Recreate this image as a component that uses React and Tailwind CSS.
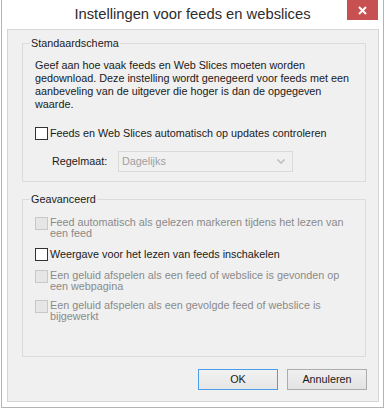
const font = { fontFamily: '"Liberation Sans", Arial, sans-serif' };

function Box({ disabled }) {
    return (
        <div
            className={
                "w-[13px] h-[13px] shrink-0 border " +
                (disabled ? "border-[#c8c8c8] bg-[#e6e6e6]" : "border-[#333333] bg-white")
            }
        />
    );
}

function Check({ disabled, lines, className }) {
    return (
        <div className={"flex items-start " + (className || "")}>
            <Box disabled={disabled} />
            <div
                className={
                    "ml-[2px] whitespace-nowrap " +
                    (lines.length > 1 ? "leading-[11px]" : "leading-[13px]") +
                    (disabled ? " text-[#8a8a8a]" : " text-[#1a1a1a]")
                }
            >
                {lines.map((l, i) => (
                    <div key={i}>{l}</div>
                ))}
            </div>
        </div>
    );
}

function Group({ title, className, children }) {
    return (
        <div className={"relative ml-[14px] w-[344px] border border-[#dcdcdc] pl-[12px] " + className}>
            <span className="absolute left-[7px] top-[-7px] bg-[#f0f0f0] px-[1px] leading-[13px] text-[#1a1a1a]">
                {title}
            </span>
            {children}
        </div>
    );
}

export default function App() {
    return (
        <div className="w-[385px] h-[409px] bg-white px-[1px] pb-[1px] text-[10.8px]" style={font}>
            <div className="w-[383px] h-[408px] border-x border-b border-[#b4b4b4] bg-white">
                {/* title bar */}
                <div className="relative h-[29px] flex items-center justify-center">
                    <span className="text-[14.75px] text-[#2d2d2d] leading-[29px]">
                        Instellingen voor feeds en webslices
                    </span>
                    <div className="absolute right-[5px] top-0 w-[31px] h-[20px] bg-[#c75050] flex items-center justify-center">
                        <svg width="9" height="9" viewBox="0 0 9 9">
                            <path d="M1 1L8 8M8 1L1 8" stroke="white" strokeWidth="2" />
                        </svg>
                    </div>
                </div>

                {/* client area */}
                <div className="ml-[5px] w-[372px] h-[373px] border border-[#d5d5d5] bg-[#f0f0f0]">
                    <Group title="Standaardschema" className="mt-[13px] h-[139px] pt-[15px]">
                        <div className="leading-[13px] text-[#1a1a1a] whitespace-nowrap">
                            <div>Geef aan hoe vaak feeds en Web Slices moeten worden</div>
                            <div>gedownload. Deze instelling wordt genegeerd voor feeds met een</div>
                            <div>aanbeveling van de uitgever die hoger is dan de opgegeven</div>
                            <div>waarde.</div>
                        </div>
                        <Check
                            className="mt-[16px]"
                            lines={["Feeds en Web Slices automatisch op updates controleren"]}
                        />
                        <div className="mt-[11px] ml-[17px] flex items-center">
                            <span className="w-[66px] text-[#1a1a1a]">Regelmaat:</span>
                            <div className="w-[175px] h-[21px] border border-[#dadada] bg-[#f0f0f0] flex items-center justify-between pl-[3px] pr-[7px]">
                                <span className="text-[#a0a0a0]">Dagelijks</span>
                                <svg width="8" height="5" viewBox="0 0 8 5">
                                    <path d="M0.5 0.5L4 4L7.5 0.5" stroke="#c0c0c0" strokeWidth="1.6" fill="none" />
                                </svg>
                            </div>
                        </div>
                    </Group>

                    <Group title="Geavanceerd" className="mt-[17px] h-[158px] pt-[17px]">
                        <Check
                            disabled
                            lines={[
                                "Feed automatisch als gelezen markeren tijdens het lezen van",
                                "een feed",
                            ]}
                        />
                        <Check
                            className="mt-[9px]"
                            lines={["Weergave voor het lezen van feeds inschakelen"]}
                        />
                        <Check
                            disabled
                            className="mt-[9px]"
                            lines={[
                                "Een geluid afspelen als een feed of webslice is gevonden op",
                                "een webpagina",
                            ]}
                        />
                        <Check
                            disabled
                            className="mt-[8px]"
                            lines={[
                                "Een geluid afspelen als een gevolgde feed of webslice is",
                                "bijgewerkt",
                            ]}
                        />
                    </Group>

                    <div className="mt-[12px] flex justify-end gap-[9px] pr-[11px]">
                        <button className="w-[80px] h-[21px] border border-[#4a9de6] bg-gradient-to-b from-[#f2f2f2] to-[#e6e6e6] text-[#1a1a1a] leading-[19px]">
                            OK
                        </button>
                        <button className="w-[80px] h-[21px] border border-[#acacac] bg-gradient-to-b from-[#f0f0f0] to-[#e3e3e3] text-[#1a1a1a] leading-[19px]">
                            Annuleren
                        </button>
                    </div>
                </div>
            </div>
        </div>
    );
}
